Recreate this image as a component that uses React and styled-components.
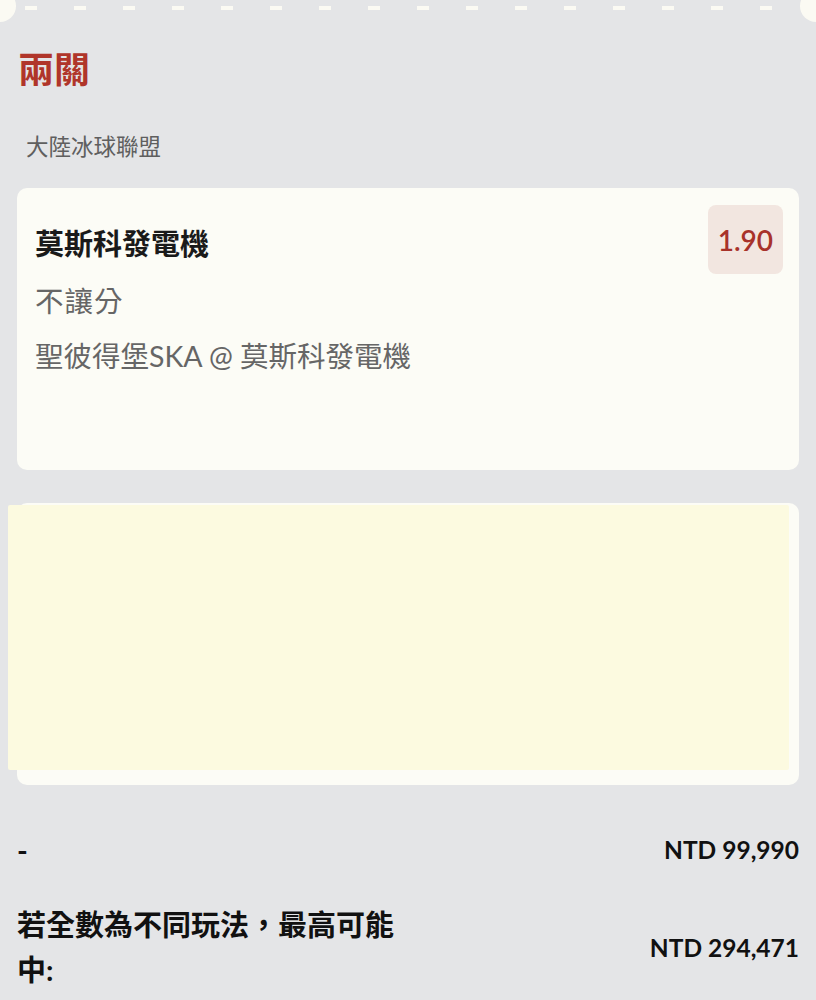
import React from 'react'
import styled, { createGlobalStyle } from 'styled-components'

const GlobalStyle = createGlobalStyle`
  body {
    margin: 0;
    background: #e4e5e7;
    font-family: Lato, "Noto Sans CJK TC", sans-serif;
  }
`

const Page = styled.div`
  width: 816px;
  height: 1000px;
  overflow: hidden;
  box-sizing: border-box;
  padding: 0 17px;
  display: flex;
  flex-direction: column;
`

const TicketEdge = styled.div`
  position: relative;
  height: 22px;
  margin: 0 -17px;
  background-image: repeating-linear-gradient(
    to right,
    transparent 0 25px,
    #fbfaf3 25px 37px,
    transparent 37px 49px
  );
  background-size: 100% 4px;
  background-position: 0 6px;
  background-repeat: no-repeat;
  &::before,
  &::after {
    content: '';
    position: absolute;
    top: -10px;
    width: 32px;
    height: 32px;
    border-radius: 50%;
    background: #fbfaf3;
  }
  &::before { left: -16px; }
  &::after { right: -16px; }
`

const Title = styled.h1`
  margin: 25px 0 0 1px;
  font-size: 36px;
  line-height: 44px;
  font-weight: 700;
  color: #b0352a;
`

const League = styled.div`
  margin: 41px 0 0 9px;
  font-size: 22.5px;
  line-height: 30px;
  color: #5f5f5f;
`

const Card = styled.div`
  box-sizing: border-box;
  height: 282px;
  background: #fcfcf6;
  border-radius: 10px;
  margin-top: ${p => p.$top}px;
  padding: 17px 16px 0 18px;
`

const CardHead = styled.div`
  display: flex;
  justify-content: space-between;
  align-items: center;
`

const Team = styled.div`
  font-size: 29px;
  font-weight: 700;
  color: #1a1a1a;
  padding-top: 4px;
`

const Odds = styled.div`
  box-sizing: border-box;
  height: 69px;
  padding: 0 10px;
  display: flex;
  align-items: center;
  background: #f2e6e0;
  border-radius: 8px;
  font-size: 28px;
  font-weight: 600;
  color: #a8322a;
`

const Detail = styled.div`
  font-size: 28.5px;
  line-height: 55px;
  color: #666;
  letter-spacing: ${p => p.$spaced ? '1px' : '0'};
  &:first-of-type { margin-top: 11px; }
`

const Highlight = styled.div`
  height: 265px;
  margin: -15px -6px 0 -27px;
  background: #fcfae0;
  border-radius: 2px;
`

const SumRow = styled.div`
  display: flex;
  justify-content: space-between;
  align-items: center;
  margin-top: ${p => p.$top}px;
  font-weight: 700;
  color: #111;
`

const SumLabel = styled.div`
  width: 50%;
  font-size: 29px;
  line-height: 45px;
`

const SumValue = styled.div`
  font-size: 24.5px;
`

export default function App() {
  return (
    <>
      <GlobalStyle />
      <Page>
        <TicketEdge />
        <Title>兩關</Title>
        <League>大陸冰球聯盟</League>
        <Card $top={26}>
          <CardHead>
            <Team>莫斯科發電機</Team>
            <Odds>1.90</Odds>
          </CardHead>
          <Detail $spaced>不讓分</Detail>
          <Detail>聖彼得堡SKA @ 莫斯科發電機</Detail>
        </Card>
        <Card $top={33}>
          <Highlight />
        </Card>
        <SumRow $top={42}>
          <SumLabel>-</SumLabel>
          <SumValue>NTD 99,990</SumValue>
        </SumRow>
        <SumRow $top={30}>
          <SumLabel>若全數為不同玩法，最高可能中:</SumLabel>
          <SumValue>NTD 294,471</SumValue>
        </SumRow>
      </Page>
    </>
  )
}
